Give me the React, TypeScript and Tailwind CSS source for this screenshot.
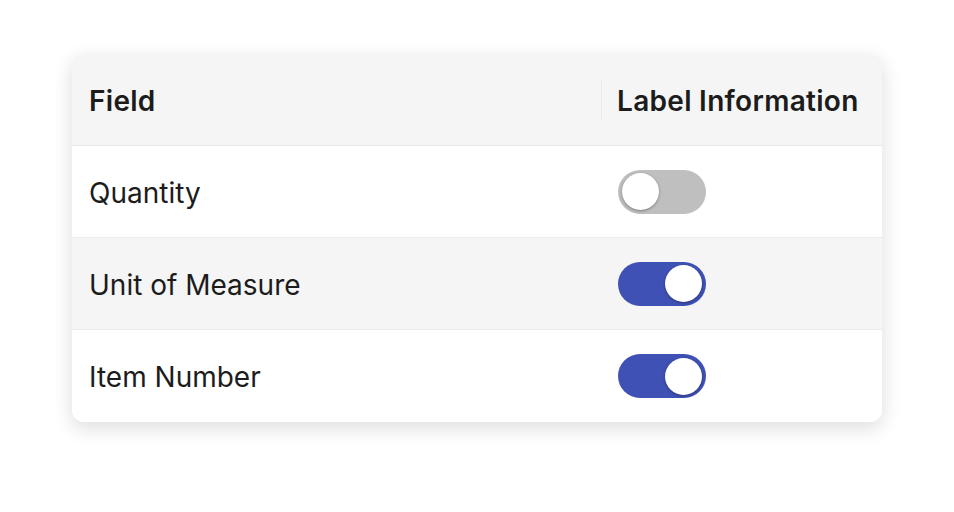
import React, { useState } from "react";

type Row = { label: string; on: boolean };

const initialRows: Row[] = [
  { label: "Quantity", on: false },
  { label: "Unit of Measure", on: true },
  { label: "Item Number", on: true },
];

const Toggle: React.FC<{ on: boolean; onChange: () => void }> = ({ on, onChange }) => (
  <button
    type="button"
    onClick={onChange}
    className={`relative flex h-[44px] w-[88px] items-center rounded-full px-[4px] ${
      on ? "bg-[#3f51b5] justify-end" : "bg-[#bfbfbf] justify-start"
    }`}
  >
    <span className="block h-[37px] w-[37px] rounded-full bg-white shadow-[0_1px_3px_rgba(0,0,0,0.35)]" />
  </button>
);

export default function App() {
  const [rows, setRows] = useState(initialRows);

  const toggle = (i: number) =>
    setRows((r) => r.map((row, j) => (j === i ? { ...row, on: !row.on } : row)));

  return (
    <div
      className="min-h-[512px] w-[954px] bg-white pl-[72px] pt-[54px] text-[#1c1c1c]"
      style={{ fontFamily: "Inter, 'Noto Sans', sans-serif" }}
    >
      <div className="w-[810px] overflow-hidden rounded-[12px] bg-white shadow-[0_6px_20px_rgba(0,0,0,0.14)]">
        {/* header */}
        <div className="flex h-[92px] items-center border-b border-[#e6e6e6] bg-[#f5f5f5]">
          <div className="w-[529px] pl-[17px] pt-[2px] text-[28px] font-semibold tracking-[0.3px]">Field</div>
          <div className="h-[40px] w-px bg-[#ebebeb]" />
          <div className="pl-[15px] pt-[2px] text-[28px] font-semibold tracking-[0.3px]">Label Information</div>
        </div>
        {rows.map((row, i) => (
          <div
            key={row.label}
            className={`flex h-[92px] items-center ${i < rows.length - 1 ? "border-b border-[#ececec]" : "h-[91px]"} ${
              i % 2 === 1 ? "bg-[#f5f5f5]" : "bg-white"
            }`}
          >
            <div className="w-[546px] pl-[17px] pt-[2px] text-[28px]">{row.label}</div>
            <Toggle on={row.on} onChange={() => toggle(i)} />
          </div>
        ))}
      </div>
    </div>
  );
}
